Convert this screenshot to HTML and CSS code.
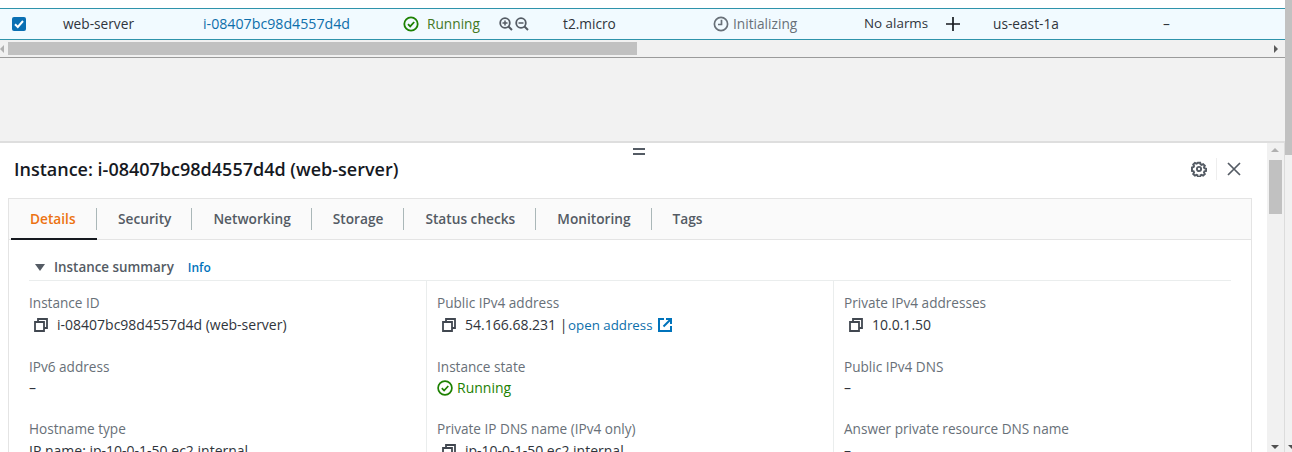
FILE: index.html
```html
<!DOCTYPE html>
<html lang="en">
<head>
<meta charset="utf-8">
<title>EC2 instance</title>
<link rel="stylesheet" href="styles.css">
</head>
<body>
<div class="page">
  <div class="content">
    <div class="top-white"></div>
    <div class="row">
      <div class="c c-check"><span class="checkbox"><svg viewBox="0 0 14 14" width="14" height="14"><path d="M3 7.2l2.8 2.8L11 4" fill="none" stroke="#fff" stroke-width="2"/></svg></span></div>
      <div class="c c-name">web-server</div>
      <div class="c c-id"><a class="link">i-08407bc98d4557d4d</a></div>
      <div class="c c-state">
        <svg class="ic" viewBox="0 0 16 16" width="16" height="16"><circle cx="8" cy="8" r="6.7" fill="none" stroke="#1d8102" stroke-width="1.8"/><path d="M5 8.2l2.2 2.2L11.2 6" fill="none" stroke="#1d8102" stroke-width="1.8"/></svg>
        <span class="running-top">Running</span>
      </div>
      <div class="c c-zoom">
        <svg viewBox="0 0 14 14" width="14" height="14"><circle cx="6" cy="6" r="4.8" fill="none" stroke="#545b64" stroke-width="1.8"/><path d="M9.5 9.5L13 13" stroke="#545b64" stroke-width="2"/><path d="M3.5 6h5M6 3.5v5" stroke="#545b64" stroke-width="1.5"/></svg>
        <svg viewBox="0 0 14 14" width="14" height="14"><circle cx="6" cy="6" r="4.8" fill="none" stroke="#545b64" stroke-width="1.8"/><path d="M9.5 9.5L13 13" stroke="#545b64" stroke-width="2"/><path d="M3.5 6h5" stroke="#545b64" stroke-width="1.5"/></svg>
      </div>
      <div class="c c-type">t2.micro</div>
      <div class="c c-check-status">
        <svg viewBox="0 0 16 16" width="16" height="16"><circle cx="8" cy="8" r="6.6" fill="none" stroke="#687078" stroke-width="1.7"/><path d="M8.5 3.8v4.7H5" fill="none" stroke="#687078" stroke-width="1.7"/></svg>
        <span class="muted">Initializing</span>
      </div>
      <div class="c c-alarm">No alarms</div>
      <div class="c c-plus"><svg viewBox="0 0 14 14" width="14" height="14"><path d="M0 7h14M7 0v14" stroke="#16191f" stroke-width="1.7"/></svg></div>
      <div class="c c-az">us-east-1a</div>
      <div class="c c-dash">–</div>
    </div>
    <div class="hscroll">
      <span class="arrow-left"></span>
      <div class="hthumb"></div>
      <span class="arrow-right"></span>
    </div>
    <div class="gap"></div>
    <div class="panel">
      <div class="panel-main">
        <div class="grip"></div>
        <div class="panel-head">
          <h2 class="panel-title">Instance: i-08407bc98d4557d4d (web-server)</h2>
          <div class="panel-actions">
            <svg viewBox="0 0 16 16" width="16" height="16"><path d="M6.6 1h2.8l.4 2 1.300.6 1.800-1 2 2-1 1.800.5 1.200 2 .5v2.800l-2 .4-.5 1.300 1 1.800-2 2-1.800-1-1.300.5-.4 2H6.600l-.4-2-1.300-.5-1.800 1-2-2 1-1.800-.5-1.300-2-.4V6.600l2-.5.5-1.200-1-1.800 2-2 1.800 1 1.300-.6z" transform="translate(1.300 .9) scale(.84)" fill="none" stroke="#545b64" stroke-width="2.300"/><circle cx="8" cy="8" r="2.100" fill="none" stroke="#545b64" stroke-width="1.900"/></svg>
            <span class="act-sep"></span>
            <svg viewBox="0 0 14 14" width="14" height="14"><path d="M1 1l12 12M13 1L1 13" stroke="#545b64" stroke-width="1.700"/></svg>
          </div>
        </div>
        <div class="card">
          <div class="tabs">
            <div class="tab active">Details</div>
            <div class="tab">Security</div>
            <div class="tab">Networking</div>
            <div class="tab">Storage</div>
            <div class="tab">Status checks</div>
            <div class="tab">Monitoring</div>
            <div class="tab last">Tags</div>
          </div>
          <div class="summary">
            <div class="summary-head">
              <span class="caret"></span>
              <span class="summary-title">Instance summary</span>
              <a class="info">Info</a>
            </div>
            <div class="cols">
              <div class="col">
                <div class="field">
                  <div class="label">Instance ID</div>
                  <div class="value"><svg class="copy" viewBox="0 0 14 14" width="14" height="14"><path d="M4 3V1h9v9h-3M1 4h9v9H1z" fill="none" stroke="#414750" stroke-width="1.800"/></svg>i-08407bc98d4557d4d (web-server)</div>
                </div>
                <div class="field">
                  <div class="label">IPv6 address</div>
                  <div class="value plain">–</div>
                </div>
                <div class="field">
                  <div class="label">Hostname type</div>
                  <div class="value plain">IP name: ip-10-0-1-50.ec2.internal</div>
                </div>
              </div>
              <div class="col">
                <div class="field">
                  <div class="label">Public IPv4 address</div>
                  <div class="value"><svg class="copy" viewBox="0 0 14 14" width="14" height="14"><path d="M4 3V1h9v9h-3M1 4h9v9H1z" fill="none" stroke="#414750" stroke-width="1.800"/></svg>54.166.68.231 | <a class="link open">open address</a><svg class="ext" viewBox="0 0 14 14" width="14" height="14"><path d="M6 1H1v12h12V8" fill="none" stroke="#0073bb" stroke-width="2"/><path d="M5.500 8.500L12 2M8 1h5v5" fill="none" stroke="#0073bb" stroke-width="2"/></svg></div>
                </div>
                <div class="field">
                  <div class="label">Instance state</div>
                  <div class="value plain state"><svg viewBox="0 0 16 16" width="16" height="16"><circle cx="8" cy="8" r="6.900" fill="none" stroke="#1d8102" stroke-width="1.700"/><path d="M4.800 8.200l2.300 2.300 4.200-4.500" fill="none" stroke="#1d8102" stroke-width="1.700"/></svg>Running</div>
                </div>
                <div class="field">
                  <div class="label">Private IP DNS name (IPv4 only)</div>
                  <div class="value"><svg class="copy" viewBox="0 0 14 14" width="14" height="14"><path d="M4 3V1h9v9h-3M1 4h9v9H1z" fill="none" stroke="#414750" stroke-width="1.800"/></svg>ip-10-0-1-50.ec2.internal</div>
                </div>
              </div>
              <div class="col">
                <div class="field">
                  <div class="label">Private IPv4 addresses</div>
                  <div class="value"><svg class="copy" viewBox="0 0 14 14" width="14" height="14"><path d="M4 3V1h9v9h-3M1 4h9v9H1z" fill="none" stroke="#414750" stroke-width="1.800"/></svg>10.0.1.50</div>
                </div>
                <div class="field">
                  <div class="label">Public IPv4 DNS</div>
                  <div class="value plain">–</div>
                </div>
                <div class="field">
                  <div class="label">Answer private resource DNS name</div>
                  <div class="value plain">–</div>
                </div>
              </div>
            </div>
          </div>
        </div>
      </div>
      <div class="vscroll">
        <span class="arrow-up"></span>
        <div class="vthumb"></div>
        <span class="arrow-down"></span>
      </div>
    </div>
  </div>
  <div class="outer-scroll">
    <div class="outer-thumb"></div>
    <span class="arrow-down outer-arrow"></span>
  </div>
</div>
</body>
</html>
```
FILE: styles.css
```css
* { box-sizing: border-box; }
html, body { margin: 0; padding: 0; height: 452px; overflow: hidden; background: #fff; }
body { font-family: "Open Sans", "Noto Sans", "Liberation Sans", sans-serif; font-size: 13px; color: #16191f; }
.page { display: flex; width: 1292px; height: 452px; overflow: hidden; }
.content { width: 1285px; display: flex; flex-direction: column; height: 452px; flex: none; }
.top-white { height: 8px; flex: none; }
.row { height: 32px; flex: none; display: flex; align-items: center; background: #f1faff; border-top: 1px solid #2e93ab; border-bottom: 1px solid #2e93ab; font-size: 13.7px; color: #2f343b; }
.c { display: flex; align-items: center; flex: none; white-space: nowrap; }
.c-name, .c-id, .running-top, .c-type, .muted, .c-alarm, .c-az, .c-dash { padding-bottom: 2px; }
.c-check { width: 63px; padding-left: 12px; }
.checkbox { width: 14px; height: 14px; background: #0a6fb3; border-radius: 2px; display: block; }
.checkbox svg { display: block; }
.c-name { width: 140px; }
.c-id { width: 200px; font-size: 14.2px; }
.link { color: #0d6fab; }
.c-state { width: 96px; gap: 8px; }
.running-top { color: #44791f; }
.c-zoom { width: 64px; gap: 2px; }
.c-type { width: 150px; }
.c-check-status { width: 151px; gap: 4px; }
.muted { color: #687078; }
.c-alarm { width: 82px; font-size: 13.4px; }
.c-plus { width: 47px; }
.c-az { width: 170px; }
.hscroll { height: 18px; flex: none; background: #f1f1f1; border-bottom: 1px solid #9b9b9b; display: flex; align-items: center; }
.arrow-left { width: 0; height: 0; border: 4px solid transparent; border-left: 0; border-right: 4px solid #b0b0b0; flex: none; }
.hthumb { width: 629px; height: 13px; background: #c1c1c1; margin-left: 4px; flex: none; }
.arrow-right { width: 0; height: 0; border: 4px solid transparent; border-right: 0; border-left: 4px solid #5a5a5a; margin-left: 637px; flex: none; }
.gap { height: 83px; flex: none; background: #f2f2f2; }
.panel { flex: 1; min-height: 0; display: flex; border-top: 2px solid #dedede; background: #fff; overflow: hidden; }
.panel-main { width: 1267px; flex: none; position: relative; }
.grip { position: absolute; left: 633px; top: 5px; width: 12px; height: 7px; border-top: 2px solid #545b64; border-bottom: 2px solid #545b64; }
.panel-head { height: 55px; display: flex; align-items: center; justify-content: space-between; padding: 0 26px 4px 14px; }
.panel-title { margin: 0; font-size: 18px; font-weight: 600; color: #16191f; white-space: nowrap; }
.panel-actions { display: flex; align-items: center; }
.act-sep { width: 1px; height: 22px; background: #eee; margin: 0 10px 0 9px; }
.card { margin-left: 8px; width: 1244px; border: 1px solid #e4e4e4; border-bottom: 0; }
.tabs { height: 41px; display: flex; background: #fafafa; border-bottom: 1px solid #e4e4e4; padding-left: 2px; align-items: stretch; }
.tab { display: flex; align-items: center; padding: 0 21px 1px; font-size: 13.7px; font-weight: 600; color: #545b64; position: relative; white-space: nowrap; }
.tab:first-child { padding: 0 20px 0 19px; width: 86px; }
.tab::after { content: ""; position: absolute; right: 0; top: 9px; height: 22px; width: 1px; background: #aab7b8; }
.tab.last::after { display: none; }
.tab.active { color: #ec7211; border-bottom: 2px solid #16191f; margin-bottom: -1px; }
.summary { padding: 0 20px; }
.summary-head { height: 41px; display: flex; align-items: center; border-bottom: 1px solid #eaeded; padding: 14px 0 0 6px; }
.caret { width: 0; height: 0; border-left: 5px solid transparent; border-right: 5px solid transparent; border-top: 7px solid #545b64; margin-right: 9px; }
.summary-title { font-weight: 600; font-size: 13.4px; color: #545b64; margin-right: 14px; }
.info { font-weight: 600; font-size: 12px; color: #0073bb; }
.cols { display: grid; grid-template-columns: 397px 407px 400px; }
.col { padding: 13px 0 0 10px; border-left: 1px solid #eaeded; height: 200px; }
.col:first-child { border-left: 0; padding-left: 0; }
.field { height: 62px; }
.field:first-child { height: 64px; }
.label { color: #687078; font-size: 13.6px; line-height: 18px; }
.value { display: flex; align-items: center; color: #2f343b; font-size: 14px; line-height: 18px; margin-top: 4px; padding-left: 5px; white-space: pre; }
.value.plain { padding-left: 0; }
.field:nth-child(2) .value { margin-top: 3px; }
.copy { margin-right: 9px; flex: none; }
.open { margin-left: -3px; font-size: 13.3px; }
.ext { margin-left: 5px; }
.state { color: #1d8102; gap: 4px; }
.vscroll { width: 18px; flex: none; background: #f1f1f1; border-right: 1px solid #dcdcdc; position: relative; }
.arrow-up { position: absolute; left: 4px; top: 5px; width: 0; height: 0; border: 4px solid transparent; border-top: 0; border-bottom: 4px solid #b0b0b0; }
.vthumb { position: absolute; left: 2px; top: 17px; width: 13px; height: 54px; background: #c1c1c1; }
.arrow-down { position: absolute; left: 4px; bottom: 3px; width: 0; height: 0; border: 4px solid transparent; border-bottom: 0; border-top: 4px solid #505050; }
.outer-scroll { width: 7px; flex: none; background: #f1f1f1; position: relative; }
.outer-thumb { height: 155px; width: 100%; background: #c1c1c1; }
.outer-arrow { left: 3px; }
```
